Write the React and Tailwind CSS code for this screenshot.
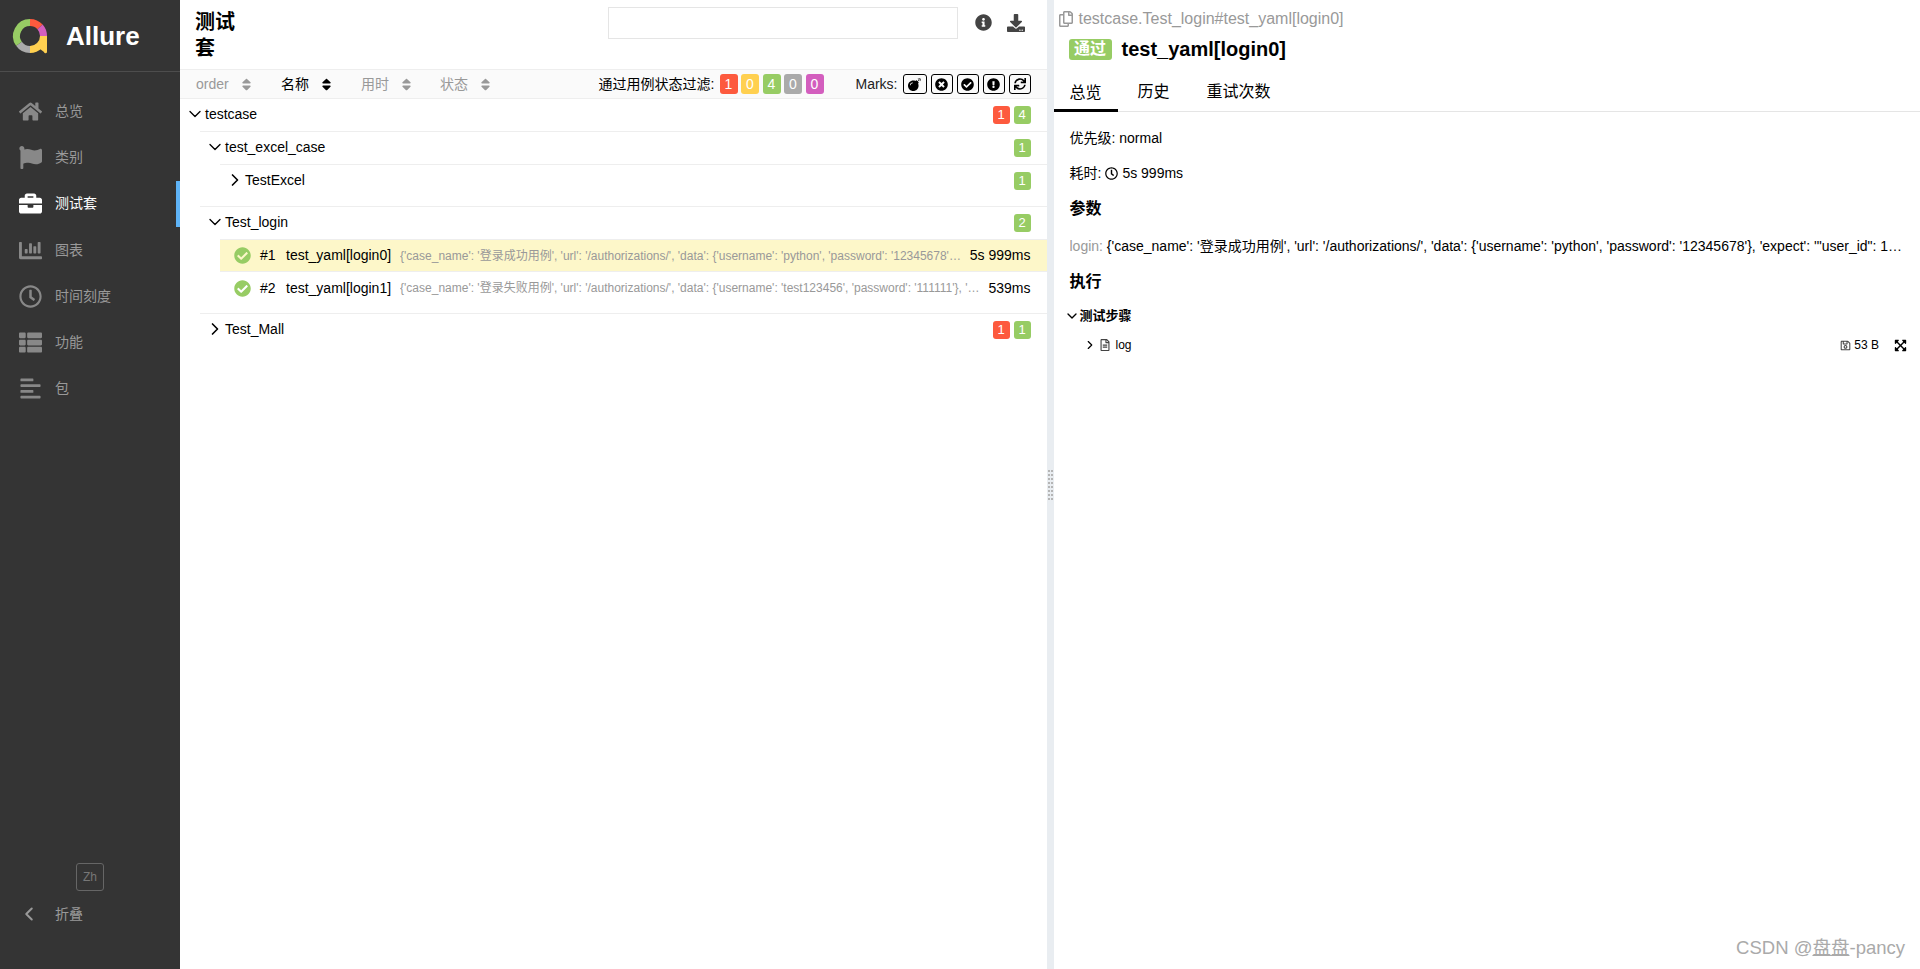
import React from 'react';
import {
  FaHome, FaFlag, FaBriefcase, FaChartBar, FaRegClock, FaThList, FaAlignLeft,
  FaInfoCircle, FaDownload, FaBomb, FaTimesCircle, FaCheckCircle, FaExclamationCircle,
  FaSync, FaRegCopy, FaRegSave, FaExpandArrowsAlt, FaRegFileAlt, FaSort,
} from 'react-icons/fa';
import { ChevronDown, ChevronRight, ChevronLeft } from 'lucide-react';

const navItems = [
  { label: '总览', icon: FaHome },
  { label: '类别', icon: FaFlag },
  { label: '测试套', icon: FaBriefcase, active: true },
  { label: '图表', icon: FaChartBar },
  { label: '时间刻度', icon: FaRegClock },
  { label: '功能', icon: FaThList },
  { label: '包', icon: FaAlignLeft },
];

const arc = (a0, a1, r = 13.5, cx = 30, cy = 36) => {
  const p = (a) => [cx + r * Math.sin((a * Math.PI) / 180), cy - r * Math.cos((a * Math.PI) / 180)];
  const [x0, y0] = p(a0);
  const [x1, y1] = p(a1);
  return `M${x0} ${y0}A${r} ${r} 0 ${a1 - a0 > 180 ? 1 : 0} 1 ${x1} ${y1}`;
};

const Logo = () => (
  <svg width="60" height="71" viewBox="0 0 60 71" className="shrink-0">
    <g fill="none" strokeWidth="7">
      <path d={arc(0, 48)} stroke="#fd5a3e" />
      <path d={arc(48, 90)} stroke="#d35ebe" />
      <path d={arc(90, 180)} stroke="#ffd050" />
      <path d={arc(180, 235)} stroke="#aaaaaa" />
      <path d={arc(235, 360)} stroke="#97cc64" />
    </g>
    <path d="M40 36h7v15.5a1.5 1.5 0 0 1-3 0.5q-2-1.5-4-3z" fill="#ffd050" />
  </svg>
);

const Sidebar = () => (
  <aside className="w-[180px] shrink-0 h-full bg-[#343434] flex flex-col text-[14px]">
    <div className="h-[72px] border-b border-[#4d4d4d] flex items-center shrink-0">
      <Logo />
      <span className="text-white text-[26px] font-bold ml-[6px] mt-[2px]">Allure</span>
    </div>
    <nav className="mt-[16px]">
      {navItems.map(({ label, icon: Icon, active }) => (
        <div
          key={label}
          className={`h-[46.3px] flex items-center pl-[19px] ${active ? 'text-white border-r-4 border-[#5eb3f6]' : 'text-[#999]'}`}
        >
          <span className="w-[36px] flex"><Icon size={23} className={active ? 'text-white' : 'text-[#888]'} /></span>
          <span>{label}</span>
        </div>
      ))}
    </nav>
    <div className="mt-auto pb-[44px]">
      <div className="w-[28px] h-[28px] ml-[76px] border border-[#666] rounded-[3px] text-[#777] text-[12px] flex items-center justify-center">Zh</div>
      <div className="flex items-center text-[#999] mt-[12px] h-[22px]">
        <ChevronLeft size={22} strokeWidth={2.2} className="ml-[18px] mr-[15px]" />
        <span>折叠</span>
      </div>
    </div>
  </aside>
);

const SortCol = ({ label, active, width }) => (
  <div className={`flex items-center ${width} ${active ? 'text-black' : 'text-[#999]'}`}>
    <span>{label}</span>
    <FaSort size={15} className="ml-[10px]" />
  </div>
);

const filterBadges = [
  { n: 1, c: 'bg-[#fd5a3e]' },
  { n: 0, c: 'bg-[#ffd050]' },
  { n: 4, c: 'bg-[#97cc64]' },
  { n: 0, c: 'bg-[#aaaaaa]' },
  { n: 0, c: 'bg-[#d35ebe]' },
];

const Toolbar = () => (
  <div className="h-[30px] bg-[#fafafa] border-y border-[#eeeeee] flex items-center text-[14px] pl-[16px] pr-[16px]">
    <SortCol label="order" width="w-[85px]" />
    <SortCol label="名称" active width="w-[80px]" />
    <SortCol label="用时" width="w-[79px]" />
    <SortCol label="状态" width="w-[80px]" />
    <div className="ml-auto flex items-center">
      <span className="mr-[5px]">通过用例状态过滤:</span>
      <div className="flex gap-[3.5px]">
        {filterBadges.map((b, i) => (
          <span key={i} className={`${b.c} w-[18px] h-[20px] rounded-[3px] text-white text-[14px] flex items-center justify-center`}>{b.n}</span>
        ))}
      </div>
    </div>
    <div className="ml-[32px] flex items-center">
      <span className="mr-[5px] text-[#222]">Marks:</span>
      <div className="flex gap-[4px]">
        <span className="w-[24px] h-[20px] border border-black rounded-[3px] flex items-center justify-center"><FaBomb size={13} /></span>
        <span className="w-[22px] h-[20px] border border-black rounded-[3px] flex items-center justify-center"><FaTimesCircle size={13} /></span>
        <span className="w-[22px] h-[20px] border border-black rounded-[3px] flex items-center justify-center"><FaCheckCircle size={13} /></span>
        <span className="w-[22px] h-[20px] border border-black rounded-[3px] flex items-center justify-center"><FaExclamationCircle size={13} /></span>
        <span className="w-[22px] h-[20px] border border-black rounded-[3px] flex items-center justify-center"><FaSync size={12} /></span>
      </div>
    </div>
  </div>
);

const Count = ({ n, red }) => (
  <span className={`${red ? 'bg-[#fd5a3e]' : 'bg-[#97cc64]'} w-[17px] h-[18px] rounded-[3px] text-white text-[13px] flex items-center justify-center`}>{n}</span>
);

const GroupHead = ({ name, open, failed, passed }) => (
  <div className="h-[32px] flex items-center pr-[16px] text-[14px]">
    <span className="w-[25px] pl-[5px] pb-[2px] flex justify-center text-black">
      {open ? <ChevronDown size={20} strokeWidth={1.6} /> : <ChevronRight size={20} strokeWidth={2} />}
    </span>
    <span className="pb-[2px]">{name}</span>
    <div className="ml-auto flex gap-[4px]">
      {failed ? <Count n={failed} red /> : null}
      <Count n={passed} />
    </div>
  </div>
);

const CaseRow = ({ order, name, params, time, selected }) => (
  <div className={`flex items-center pr-[16px] text-[14px] border-t ${selected ? 'h-[33px] bg-[#fdf7c9] border-[#eeeeee] border-b' : 'h-[31px] border-transparent'}`}>
    <FaCheckCircle size={17} className="text-[#97cc64] ml-[14px] shrink-0" />
    <span className="ml-[9px] w-[26px] shrink-0">{order}</span>
    <span className="shrink-0">{name}</span>
    <span className="ml-[9px] flex-1 min-w-0 truncate text-[12px] text-[#999]">{params}</span>
    <span className="ml-[8px] shrink-0">{time}</span>
  </div>
);

const LeftPane = () => (
  <section className="flex-1 min-w-0 h-full bg-white flex flex-col">
    <div className="h-[69px] flex shrink-0">
      <h2 className="ml-[15px] mt-[9px] w-[45px] text-[20px] leading-[26px] font-bold text-black">测试套</h2>
      <div className="ml-[368px] mt-[7px] w-[350px] h-[32px] border border-[#e5e5e5] bg-white" />
      <div className="ml-[17px] mt-[14px] flex items-start gap-[15px] text-[#444]">
        <FaInfoCircle size={17} />
        <FaDownload size={18} />
      </div>
    </div>
    <Toolbar />
    <GroupHead name="testcase" open failed={1} passed={4} />
    <div className="ml-[20px]">
      <div className="border-t border-[#eeeeee]">
        <GroupHead name="test_excel_case" open passed={1} />
        <div className="ml-[20px] pb-[9px] border-t border-[#eeeeee]">
          <GroupHead name="TestExcel" passed={1} />
        </div>
      </div>
      <div className="border-t border-[#eeeeee]">
        <GroupHead name="Test_login" open passed={2} />
        <div className="ml-[20px] pb-[10px]">
          <CaseRow
            selected
            order="#1"
            name="test_yaml[login0]"
            time="5s 999ms"
            params="{'case_name': '登录成功用例', 'url': '/authorizations/', 'data': {'username': 'python', 'password': '12345678'}, 'expect': '&quot;user_id&quot;: 1, &quot;username&quot;: &quot;python&quot;'}"
          />
          <CaseRow
            order="#2"
            name="test_yaml[login1]"
            time="539ms"
            params="{'case_name': '登录失败用例', 'url': '/authorizations/', 'data': {'username': 'test123456', 'password': '111111'}, 'expect': 'non_field_errors'}"
          />
        </div>
      </div>
      <div className="border-t border-[#eeeeee]">
        <GroupHead name="Test_Mall" failed={1} passed={1} />
      </div>
    </div>
  </section>
);

const Gutter = () => (
  <div className="w-[7px] shrink-0 h-full bg-[#e9edf1] flex items-center justify-center">
    <div className="grid grid-cols-2 gap-x-px gap-y-[2px]">
      {Array.from({ length: 16 }).map((_, i) => (
        <span key={i} className="w-[2px] h-[2px] bg-[#b5b5b5]" />
      ))}
    </div>
  </div>
);

const RightPane = () => (
  <section className="flex-1 min-w-0 h-full bg-white flex flex-col relative">
    <div className="flex items-center text-[#999] text-[16px] pl-[4px] h-[36px] pt-[1px]">
      <FaRegCopy size={16} className="mr-[5px]" />
      <span>testcase.Test_login#test_yaml[login0]</span>
    </div>
    <div className="flex items-center pl-[15px] h-[26px]">
      <span className="bg-[#97cc64] text-white font-bold text-[16px] h-[21px] w-[43px] rounded-[3px] flex items-center justify-center">通过</span>
      <span className="ml-[10px] text-[20px] font-bold text-black">test_yaml[login0]</span>
    </div>
    <div className="flex border-b border-[#e5e5e5] h-[50px] items-end text-[16px]">
      <div className="w-[64px] h-[38px] border-b-[3px] border-black text-center leading-[38px] -mb-px">总览</div>
      <div className="w-[64px] ml-[4px] h-[38px] text-center leading-[38px]">历史</div>
      <div className="ml-[5px] px-[16px] h-[38px] text-center leading-[38px]">重试次数</div>
    </div>
    <div className="pl-[16px] pr-[16px] text-[14px] text-black">
      <div className="mt-[17px] leading-[18px]">优先级: normal</div>
      <div className="mt-[17px] leading-[18px] flex items-center">
        耗时:<FaRegClock size={13} className="mx-[4px]" />5s 999ms
      </div>
      <h3 className="mt-[17px] text-[16px] leading-[20px] font-bold">参数</h3>
      <div className="mt-[18px] leading-[18px] truncate">
        <span className="text-[#999]">login: </span>
        {"{'case_name': '登录成功用例', 'url': '/authorizations/', 'data': {'username': 'python', 'password': '12345678'}, 'expect': '\"user_id\": 1, \"username\": \"python\"'}"}
      </div>
      <h3 className="mt-[17px] text-[16px] leading-[20px] font-bold">执行</h3>
    </div>
    <div className="mt-[15px] flex items-center h-[18px] pl-[10px] text-[13px] font-bold">
      <ChevronDown size={16} strokeWidth={2} className="mr-[0px]" />
      测试步骤
    </div>
    <div className="mt-[10px] flex items-center h-[20px] pl-[29px] text-[12px] pr-[13px]">
      <ChevronRight size={14} strokeWidth={2} className="mr-[2px]" />
      <FaRegFileAlt size={12} className="mr-[5px] text-[#444]" />
      log
      <span className="ml-auto flex items-center">
        <FaRegSave size={11} className="mr-[3px] text-[#444]" />53 B
      </span>
      <FaExpandArrowsAlt size={13} className="ml-[15px]" />
    </div>
    <div className="absolute right-[15px] bottom-[7px] text-[18.5px] text-[#aaa]">
      CSDN @<span className="underline">盘盘</span>-pancy
    </div>
  </section>
);

export default function App() {
  return (
    <div className="w-full h-[969px] flex overflow-hidden bg-white text-black font-['Liberation_Sans','Noto_Sans_CJK_SC',sans-serif]">
      <Sidebar />
      <LeftPane />
      <Gutter />
      <RightPane />
    </div>
  );
}
